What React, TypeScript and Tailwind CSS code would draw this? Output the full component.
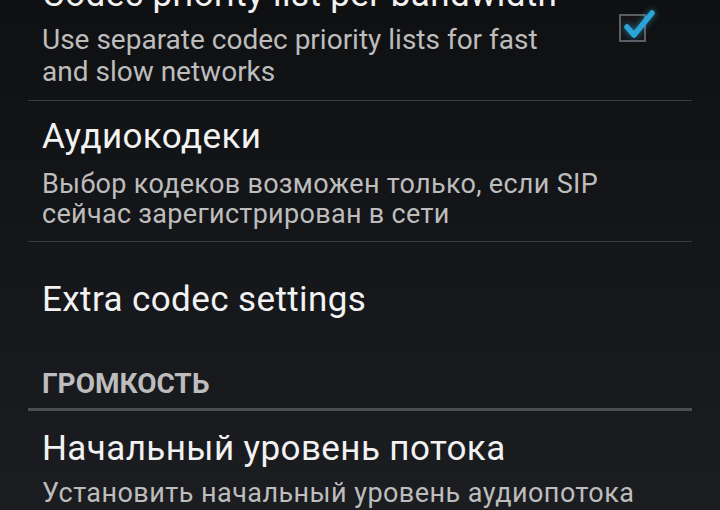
import React from "react";

const font = { fontFamily: "Roboto, 'Noto Sans', sans-serif" };

function Divider({ thick = false }: { thick?: boolean }) {
  return thick ? (
    <div className="mx-[28px] h-[3px] bg-[#4a4d52]" />
  ) : (
    <div className="mx-[28px] h-px bg-[#3a3c40]" />
  );
}

function CheckBox() {
  return (
    <div className="relative h-[28px] w-[27px] border-2 border-[#5c5e62] bg-[#141518]">
      <svg
        className="absolute left-[2px] top-[-6px] overflow-visible"
        width="34"
        height="30"
        viewBox="0 0 34 30"
      >
        <path
          d="M4 17 L11 25 L29 3"
          fill="none"
          stroke="#2aa3d8"
          strokeWidth="5.5"
          strokeLinecap="round"
          strokeLinejoin="round"
          style={{ filter: "drop-shadow(0 0 3px rgba(51,181,229,0.6))" }}
        />
      </svg>
    </div>
  );
}

export default function App() {
  return (
    <div
      style={font}
      className="h-[510px] w-[720px] overflow-hidden bg-gradient-to-b from-[#0f1012] to-[#1b1d21]"
    >
      {/* codec priority per bandwidth (scrolled past the top) */}
      <div className="mt-[-25px] flex pl-[42px] pr-[74px] pb-[12px]">
        <div className="flex-1">
          <div className="text-[35px] leading-[40px] tracking-[0.4px] text-[#f2f2f2]">
            Codec priority list per bandwidth
          </div>
          <div className="mt-[9px] w-[540px] text-[28px] leading-[32px] text-[#bdbdbd]">
            Use separate codec priority lists for fast and slow networks
          </div>
        </div>
        <div className="mt-[39px]">
          <CheckBox />
        </div>
      </div>
      <Divider />

      <div className="px-[42px] pt-[16px] pb-[12px]">
        <div className="text-[35px] leading-[40px] tracking-[0.4px] text-[#f2f2f2]">Аудиокодеки</div>
        <div className="mt-[12px] w-[620px] text-[27px] leading-[30px] tracking-[0.3px] text-[#bdbdbd]">
          Выбор кодеков возможен только, если SIP сейчас зарегистрирован в сети
        </div>
      </div>
      <Divider />

      <div className="px-[42px] pt-[38px] pb-[25px]">
        <div className="text-[35px] leading-[40px] tracking-[0.4px] text-[#f2f2f2]">
          Extra codec settings
        </div>
      </div>

      <div className="px-[42px] pt-[22px] pb-[8px]">
        <div className="text-[28px] font-bold leading-[33px] text-[#bdbdbd]">ГРОМКОСТЬ</div>
      </div>
      <Divider thick />

      <div className="px-[42px] pt-[18px]">
        <div className="text-[35px] leading-[40px] tracking-[0.4px] text-[#f2f2f2]">
          Начальный уровень потока
        </div>
        <div className="mt-[9px] whitespace-nowrap text-[27px] leading-[30px] tracking-[0.45px] text-[#bdbdbd]">
          Установить начальный уровень аудиопотока
        </div>
      </div>
    </div>
  );
}
